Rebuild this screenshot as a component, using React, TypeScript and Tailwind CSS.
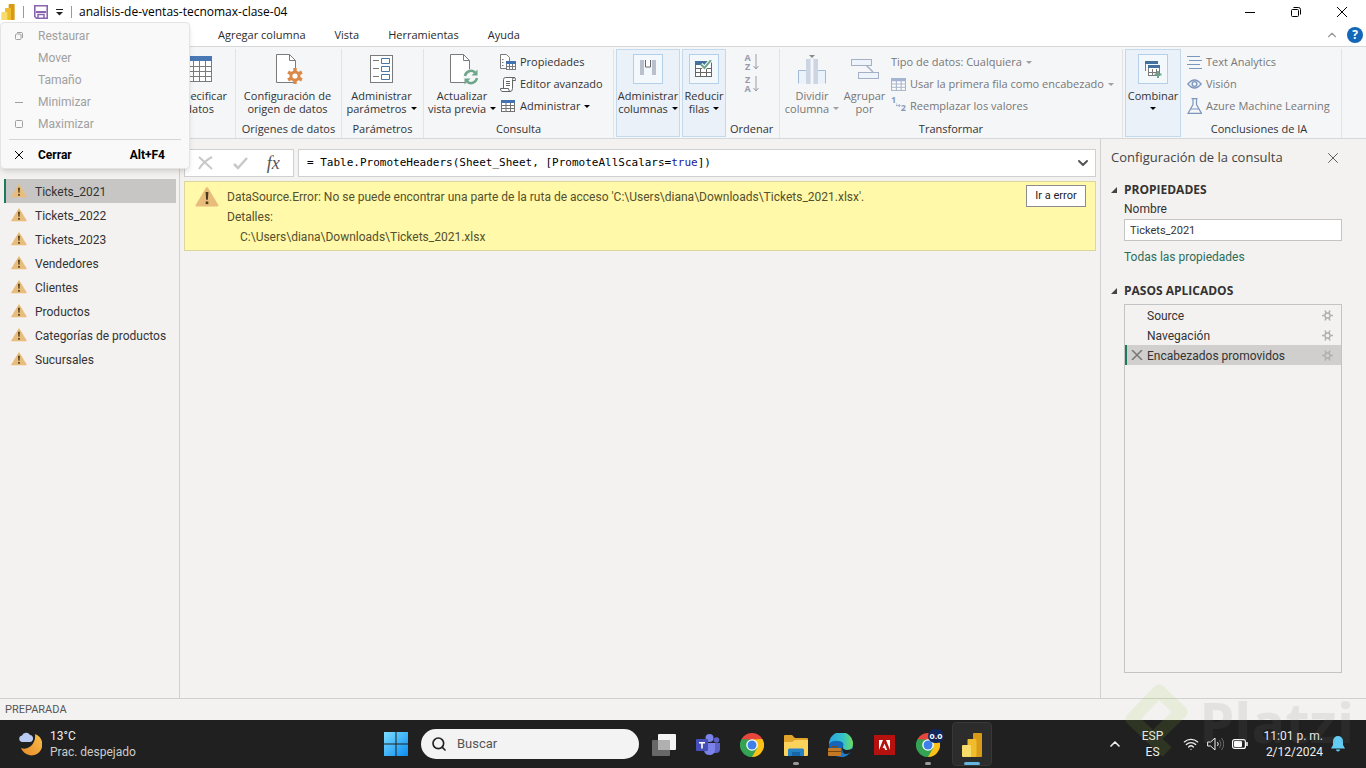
import React, { useState } from "react";
import { ChevronDown, ChevronUp, Search, Wifi, X } from "lucide-react";

const queries = [
  "Tickets_2021",
  "Tickets_2022",
  "Tickets_2023",
  "Vendedores",
  "Clientes",
  "Productos",
  "Categorías de productos",
  "Sucursales",
];

const steps = ["Source", "Navegación", "Encabezados promovidos"];

function Caret({ muted = false }: { muted?: boolean }) {
  return (
    <svg width="6" height="3" viewBox="0 0 6 3" className={`inline-block align-middle ${muted ? "text-[#a0a0a0]" : "text-black"}`}>
      <path d="M0 0h6L3 3z" fill="currentColor" />
    </svg>
  );
}

function Warning({ size }: { size: number }) {
  return (
    <svg width={size} height={size} viewBox="0 0 24 24" className="shrink-0">
      <path d="M12 3 22.500 20.500h-21z" fill="#e8bd7b" stroke="#e8bd7b" strokeWidth="2" strokeLinejoin="round" />
      <path d="M10.600 7h2.800l-.5 7.800h-1.800z" fill="#4a3a20" />
      <rect x="10.700" y="16.500" width="2.600" height="2.600" fill="#4a3a20" />
    </svg>
  );
}

function PowerBiLogo({ className }: { className: string }) {
  return (
    <svg viewBox="0 0 20 24" className={className}>
      <rect x="11" y="0" width="9" height="24" rx="1" fill="#d99b16" />
      <rect x="5.5" y="6" width="9" height="18" rx="1" fill="#eebc2d" />
      <rect x="0" y="12" width="9" height="12" rx="1" fill="#f8dc6a" />
    </svg>
  );
}

function TableIcon({ muted = false, size = 14 }: { muted?: boolean; size?: number }) {
  const line = muted ? "#a9b4c8" : "#737373";
  const head = muted ? "#a3b5d3" : "#4273b0";
  return (
    <svg width={size} height={size} viewBox="0 0 14 14" className="shrink-0">
      <rect x="0.5" y="1.5" width="13" height="11" fill="#fff" stroke={line} />
      <path d="M.5 6.5h13M.5 9.5h13M5 3v10M9.5 3v10" stroke={line} fill="none" />
      <rect x="0" y="1" width="14" height="3" fill={head} />
    </svg>
  );
}

function PageShape() {
  return (
    <>
      <path d="M4.5.5h13l6 6v22h-19z" fill="#fff" stroke="#7b7b7b" />
      <path d="M17.500.5v6h6" fill="none" stroke="#7b7b7b" />
    </>
  );
}

function StepGear() {
  return (
    <svg width="11" height="11" viewBox="0 0 11 11" fill="none" stroke="#b0b0b0">
      <circle cx="5.500" cy="5.500" r="2.600" strokeWidth="1.500" />
      <path d="M0 5.500h2.500M8.500 5.500H11M3 .5l1.200 2.500M8 .5 6.800 3M3 10.500 4.200 8M8 10.500 6.800 8" strokeWidth="1.600" />
    </svg>
  );
}

function Group({ caption, width, children }: { caption?: string; width: string; children: React.ReactNode }) {
  return (
    <div className={`flex shrink-0 flex-col border-r border-[#e1e3e6] ${width}`}>
      <div className="flex h-[72px]">{children}</div>
      {caption && <div className="text-center leading-4 whitespace-nowrap">{caption}</div>}
    </div>
  );
}

interface BigButtonProps {
  lines: [string, string?];
  caret?: boolean;
  muted?: boolean;
  boxed?: boolean;
  className?: string;
  children: React.ReactNode;
}

function BigButton({ lines, caret, muted, boxed, className = "", children }: BigButtonProps) {
  return (
    <button className={`flex shrink-0 flex-col items-center ${boxed ? "h-[88px] border border-[#c3d9ec] bg-[#eaf1f8]" : ""} pt-1 ${muted ? "text-[#777]" : ""} ${className}`}>
      <span className={`flex items-center justify-center ${boxed ? "mb-px h-[30px] w-[30px] border border-[#b5cfe8] bg-[#f3f8fd]" : "h-8 w-8"}`}>{children}</span>
      <span className="mt-1 flex flex-col items-center leading-[13px] whitespace-nowrap">
        <span>{lines[0]}</span>
        <span className="flex h-[13px] items-center gap-1">
          {lines[1]}
          {caret && <Caret muted={muted} />}
        </span>
      </span>
    </button>
  );
}

function SmallButton({ label, caret, muted, icon }: { label: string; caret?: boolean; muted?: boolean; icon?: React.ReactNode }) {
  return (
    <button className={`flex h-[22px] shrink-0 items-center gap-1 whitespace-nowrap ${muted ? "text-[#777]" : ""}`}>
      {icon}
      <span>{label}</span>
      {caret && <Caret muted={muted} />}
    </button>
  );
}

function SortIcon({ top, bottom }: { top: string; bottom: string }) {
  return (
    <span className="flex items-center gap-0.5 text-[#9a9aa8]">
      <span className="flex flex-col text-[9px] leading-[9px] font-bold">
        <span>{top}</span>
        <span>{bottom}</span>
      </span>
      <svg width="6" height="16" viewBox="0 0 6 16" fill="none" stroke="currentColor">
        <path d="M3 0v15M.5 12 3 15l2.500-3" />
      </svg>
    </span>
  );
}

function TitleBar() {
  return (
    <header className="flex h-6 shrink-0 items-center bg-white pr-px text-[12px] text-black">
      <PowerBiLogo className="ml-px h-4 w-[14px]" />
      <span className="ml-2 h-3 w-px bg-[#999]" />
      <button aria-label="Guardar" className="ml-2.5">
        <svg width="14" height="14" viewBox="0 0 14 14">
          <path d="M.8.8h12.400v12.400H2.500L.8 11.500z" fill="#fff" stroke="#8a63b0" strokeWidth="1.600" />
          <rect x="2" y="6" width="10" height="2" fill="#8a63b0" />
          <path d="M4 13V9.500h6V13" fill="none" stroke="#8a63b0" strokeWidth="1.500" />
        </svg>
      </button>
      <button aria-label="Personalizar barra" className="ml-2">
        <svg width="7" height="7" viewBox="0 0 7 7">
          <path d="M0 .5h7" stroke="#222" />
          <path d="M0 3h7L3.500 6.500z" fill="#222" />
        </svg>
      </button>
      <span className="ml-2 h-3 w-px bg-[#999]" />
      <h1 className="ml-[7px]">analisis-de-ventas-tecnomax-clase-04</h1>
      <div className="ml-auto flex h-full items-center">
        <button aria-label="Minimizar" className="flex w-[46px] justify-center">
          <svg width="10" height="10" viewBox="0 0 10 10"><path d="M0 5.500h10" stroke="#000" /></svg>
        </button>
        <button aria-label="Restaurar" className="flex w-[46px] justify-center">
          <svg width="10" height="10" viewBox="0 0 10 10" fill="none" stroke="#000">
            <rect x=".5" y="2.500" width="7" height="7" rx="1" />
            <path d="M2.500.5h5a2 2 0 0 1 2 2v5" />
          </svg>
        </button>
        <button aria-label="Cerrar" className="flex w-[46px] justify-center">
          <svg width="10" height="10" viewBox="0 0 10 10"><path d="M0 0l10 10M10 0 0 10" stroke="#000" /></svg>
        </button>
      </div>
    </header>
  );
}

function Tabs() {
  return (
    <nav className="flex h-[23px] shrink-0 items-center border-b border-[#d5d7d9] bg-white pr-[3px] pl-[218px] text-[11px] text-[#2b2b2b]">
      <button>Agregar columna</button>
      <button className="ml-[29px]">Vista</button>
      <button className="ml-[29px]">Herramientas</button>
      <button className="ml-[29px]">Ayuda</button>
      <button aria-label="Contraer la cinta" className="ml-auto text-[#999]">
        <ChevronUp size={14} strokeWidth={2} />
      </button>
      <button aria-label="Ayuda" className="ml-2 flex h-4 w-4 items-center justify-center rounded-full bg-[#1267b8] text-[12px] font-bold text-white">
        ?
      </button>
    </nav>
  );
}

function Ribbon() {
  return (
    <section className="flex h-[92px] shrink-0 overflow-hidden border-b border-[#d5d7d9] bg-[#f5f6f8] pt-0.5 text-[11px] text-[#333]">
      <Group width="w-[236px]">
        <BigButton lines={["Especificar", "datos"]} className="mr-2 ml-auto">
          <svg width="25" height="26" viewBox="0 0 25 26">
            <rect x=".5" y="1.500" width="24" height="24" fill="#fff" stroke="#7b7b7b" />
            <path d="M.5 10.500h24M.5 15.500h24M.5 20.500h24M6.500 5v20M12.500 5v20M18.500 5v20" stroke="#7b7b7b" />
            <rect width="25" height="5" fill="#4a78b5" />
          </svg>
        </BigButton>
      </Group>
      <Group caption="Orígenes de datos" width="w-[106px]">
        <BigButton lines={["Configuración de", "origen de datos"]} className="w-[103px]">
          <svg width="32" height="30" viewBox="0 0 32 30">
            <PageShape />
            <g transform="translate(15 14)">
              <path d="M8 0v16M1.100 4l13.800 8M1.100 12 14.900 4" stroke="#d98a4b" strokeWidth="3.400" />
              <circle cx="8" cy="8" r="5.500" fill="#d98a4b" />
              <circle cx="8" cy="8" r="2.600" fill="#fff" />
            </g>
          </svg>
        </BigButton>
      </Group>
      <Group caption="Parámetros" width="w-[82px]">
        <BigButton lines={["Administrar", "parámetros"]} caret className="w-[79px]">
          <svg width="23" height="28" viewBox="0 0 23 28" fill="none">
            <rect x=".5" y=".5" width="22" height="27" fill="#fff" stroke="#7b7b7b" />
            <path d="M3 5.500h6M3 13.500h6M3 21.500h6" stroke="#7b7b7b" />
            <path d="M11.500 3.500h8v5h-8zM11.500 11.500h8v5h-8zM11.500 19.500h8v5h-8z" stroke="#4779a8" />
          </svg>
        </BigButton>
      </Group>
      <Group caption="Consulta" width="w-[190px]">
        <BigButton lines={["Actualizar", "vista previa"]} caret className="w-[76px]">
          <svg width="32" height="31" viewBox="0 0 32 31">
            <PageShape />
            <circle cx="25" cy="23" r="8" fill="#f5f6f8" />
            <g fill="none" stroke="#6fa58b" strokeWidth="2.500">
              <path d="M19 22a6 6 0 0 1 10-3.500M31 24a6 6 0 0 1-10 3.500" />
            </g>
            <path d="M31.500 15.500v6h-6zM18.500 30.500v-6h6z" fill="#6fa58b" />
          </svg>
        </BigButton>
        <div className="flex flex-col pt-0.5">
          <SmallButton
            label="Propiedades"
            icon={
              <svg width="16" height="16" viewBox="0 0 16 16" fill="none">
                <path d="M.5.500h6l3 3v11h-9z" fill="#fff" stroke="#7b7b7b" />
                <path d="M2 5.500h1.500M2 8.500h1.500M2 11.500h1.500" stroke="#7b7b7b" />
                <rect x="6.500" y="7.500" width="9" height="8" fill="#fff" stroke="#7b7b7b" />
                <path d="M6.500 12.500h9M9.500 9v6M12.500 9v6" stroke="#7b7b7b" />
                <rect x="6" y="7" width="10" height="3" fill="#4273b0" />
              </svg>
            }
          />
          <SmallButton
            label="Editor avanzado"
            icon={
              <svg width="16" height="15" viewBox="0 0 16 15" fill="none" stroke="#666">
                <path d="M3.500 11V2.500q0-2 2-2h9q-2 0-2 2v9q0 3-2.500 3H2q-2-1-1.500-3h8q0 3 2 3" fill="#fff" />
                <path d="M12.500 3.500h3v-1q0-2-1.500-2M6 4.500h4M6 6.500h4M6 8.500h4" />
              </svg>
            }
          />
          <SmallButton label="Administrar" caret icon={<span className="flex w-4 justify-center"><TableIcon /></span>} />
        </div>
      </Group>
      <Group width="w-[166px]">
        <div className="flex gap-0.5 pl-0.5">
          <BigButton lines={["Administrar", "columnas"]} caret boxed className="w-16">
            <svg width="18" height="20" viewBox="0 0 18 20" fill="none">
              <rect x="1" y="1" width="4" height="15" fill="#b9c0cb" />
              <rect x="13" y="1" width="4" height="15" fill="#b9c0cb" />
              <path d="M6.500 1v7h5V1" fill="#fff" stroke="#666" />
            </svg>
          </BigButton>
          <BigButton lines={["Reducir", "filas"]} caret boxed className="w-11">
            <svg width="18" height="18" viewBox="0 0 18 18" fill="none">
              <rect x=".5" y="1.500" width="16" height="15" fill="#fff" stroke="#666" />
              <path d="M.5 8.500h16M.5 12.500h16M5.500 8v8M11.500 8v8" stroke="#666" />
              <rect x="0" y="1" width="12" height="4" fill="#41719c" />
              <path d="M6 4.500 9.500 8 16 0" stroke="#fff" strokeWidth="4" />
              <path d="M6 4.500 9.500 8 16 0" stroke="#6fa58b" strokeWidth="2" />
            </svg>
          </BigButton>
          <div className="flex flex-col items-center pt-0.5 pl-0.5">
            <button aria-label="Orden ascendente" className="flex h-[22px] shrink-0 items-center"><SortIcon top="A" bottom="Z" /></button>
            <button aria-label="Orden descendente" className="flex h-[22px] shrink-0 items-center"><SortIcon top="Z" bottom="A" /></button>
            <span className="mt-[26px] leading-4">Ordenar</span>
          </div>
        </div>
      </Group>
      <Group caption="Transformar" width="w-[343px]">
        <BigButton lines={["Dividir", "columna"]} caret muted className="w-16">
          <svg width="28" height="29" viewBox="0 0 28 29" fill="none">
            <path d="M.5 28.500v-13h8v13M19.500 28.500v-13h8v13" fill="#eaf2fb" stroke="#a5b9d6" />
            <path d="M8 4h4v25H8zM16 4h4v25h-4z" fill="#cdd5e3" />
            <path d="M12.500 3v26M15.500 3v26" stroke="#dce3ee" />
            <path d="M11 0h6l-3 3z" fill="#888" />
          </svg>
        </BigButton>
        <BigButton lines={["Agrupar", "por"]} muted className="w-[41px]">
          <svg width="28" height="24" viewBox="0 0 28 24" stroke="#a5b0c4" fill="#eef4fb">
            <path d="M14 7l8 8" strokeWidth="1.500" />
            <rect x=".5" y="2.500" width="20" height="6" />
            <rect x="7.500" y="15.500" width="20" height="6" />
          </svg>
        </BigButton>
        <div className="flex flex-col pt-0.5 pl-1.5">
          <SmallButton label="Tipo de datos: Cualquiera" caret muted />
          <SmallButton label="Usar la primera fila como encabezado" caret muted icon={<TableIcon muted size={15} />} />
          <SmallButton
            label="Reemplazar los valores"
            muted
            icon={
              <span className="flex w-[15px] items-start text-[9px] leading-[10px] font-bold text-[#8a9bb8]">
                <span className="-mt-1">1</span>
                <svg width="6" height="10" viewBox="0 0 6 10" fill="none" stroke="currentColor"><path d="M0 4v3h5M3.500 5l2 2-2 2" /></svg>
                <span className="mt-1">2</span>
              </span>
            }
          />
        </div>
      </Group>
      <Group width="w-[219px]">
        <div className="flex w-full">
          <BigButton lines={["Combinar"]} boxed caret className="ml-0.5 w-14">
            <svg width="18" height="18" viewBox="0 0 18 18" fill="none">
              <path d="M1.500 11V2.500h11" stroke="#7b7b7b" />
              <rect x="1" y="1" width="13" height="3" fill="#41719c" />
              <rect x="4.500" y="6.500" width="11" height="9" fill="#fff" stroke="#7b7b7b" />
              <path d="M4.500 12.500h11M8.500 9v7M12.500 9v7" stroke="#7b7b7b" />
              <rect x="4" y="5" width="12" height="3" fill="#41719c" />
              <path d="M14 11v7M10.500 14.500h7" stroke="#6fa58b" strokeWidth="2" />
            </svg>
          </BigButton>
          <div className="flex flex-1 flex-col pt-0.5 pl-1.5">
            <SmallButton label="Text Analytics" muted icon={<svg width="15" height="14" viewBox="0 0 15 14" stroke="#7d96bd"><path d="M0 1.500h13M2 5.500h13M0 9.500h13M2 13.500h13" /></svg>} />
            <SmallButton
              label="Visión"
              muted
              icon={
                <svg width="15" height="10" viewBox="0 0 16 10" fill="none" stroke="#7d96bd" strokeWidth="1.500">
                  <path d="M1 5q7-8.500 14 0-7 8.500-14 0z" />
                  <circle cx="8" cy="5" r="2.500" />
                </svg>
              }
            />
            <SmallButton
              label="Azure Machine Learning"
              muted
              icon={
                <svg width="15" height="16" viewBox="0 0 15 16" fill="none" stroke="#7d96bd" strokeWidth="1.200">
                  <path d="M4.500.6h6M6 .6v5.900L1 15.400h13.500L9.500 6.500V.6M3.500 11h8.500" />
                </svg>
              }
            />
            <span className="mt-1 shrink-0 pr-2.5 text-center leading-4">Conclusiones de IA</span>
          </div>
        </div>
      </Group>
    </section>
  );
}

function QueryList() {
  const [selected, setSelected] = useState(queries[0]);
  return (
    <aside className="w-[180px] shrink-0 border-r border-[#d0d0d0] pt-10 pr-[3px] pl-1">
      <ul>
        {queries.map((name) => (
          <li key={name}>
            <button
              onClick={() => setSelected(name)}
              className={`flex h-6 w-full items-center gap-2 border-l-2 pl-[5px] text-left whitespace-nowrap ${name === selected ? "border-[#1d7a5f] bg-[#c8c6c4]" : "border-transparent"}`}
            >
              <Warning size={16} />
              <span className="pt-px">{name}</span>
            </button>
          </li>
        ))}
      </ul>
    </aside>
  );
}

function FormulaBar() {
  return (
    <div className="flex h-7 gap-1">
      <div className="flex w-[110px] items-center justify-around border border-[#d0d0d0] bg-white px-1">
        <button aria-label="Cancelar">
          <svg width="16" height="14" viewBox="0 0 16 14" fill="none" stroke="#c8c8c8" strokeWidth="2"><path d="M1 1l13 12M14 1Q6 5 1 13" /></svg>
        </button>
        <button aria-label="Aceptar">
          <svg width="15" height="13" viewBox="0 0 15 13" fill="none" stroke="#c8c8c8" strokeWidth="2.500"><path d="M1 7l4 4 9-10" /></svg>
        </button>
        <button aria-label="Función" className="font-['Liberation_Serif',serif] text-[18px] leading-5 text-[#555] italic">fx</button>
      </div>
      <div className="flex flex-1 items-center border border-[#d0d0d0] bg-white pr-1 pl-2">
        <code className="flex-1 font-['DejaVu_Sans_Mono',monospace] text-[11px] text-black">
          = Table.PromoteHeaders(Sheet_Sheet, [PromoteAllScalars=<span className="text-[#1a1a9c]">true</span>])
        </code>
        <button aria-label="Expandir fórmula" className="text-[#555]">
          <ChevronDown size={16} strokeWidth={3} />
        </button>
      </div>
    </div>
  );
}

function ErrorPanel() {
  return (
    <div role="alert" className="mt-1 flex h-[70px] items-start border border-[#dcd69a] bg-[#fff9a9] pt-[3px] pr-[9px] pl-2.5 text-[#55502e]">
      <Warning size={24} />
      <div className="ml-2 flex-1 pt-0.5 leading-5">
        <p>DataSource.Error: No se puede encontrar una parte de la ruta de acceso 'C:\Users\diana\Downloads\Tickets_2021.xlsx'.</p>
        <p>Detalles:</p>
        <p className="pl-[13px]">C:\Users\diana\Downloads\Tickets_2021.xlsx</p>
      </div>
      <button className="h-[22px] w-[60px] border border-[#8c8c8c] bg-white text-[11px] text-[#222]">Ir a error</button>
    </div>
  );
}

function SectionTitle({ children }: { children: React.ReactNode }) {
  return (
    <h3 className="flex items-center gap-[7px] font-['Open_Sans',sans-serif] leading-5 font-bold text-[#333]">
      <svg width="6" height="6" viewBox="0 0 6 6"><path d="M6 0v6H0z" fill="#444" /></svg>
      {children}
    </h3>
  );
}

function Settings() {
  const [name, setName] = useState("Tickets_2021");
  return (
    <aside className="flex w-[266px] shrink-0 flex-col border-l border-[#d0d0d0] pt-[9px] pr-6 pb-[25px] pl-2.5">
      <div className="flex h-5 items-center justify-between">
        <h2 className="font-['Open_Sans',sans-serif] text-[13px] text-[#444]">Configuración de la consulta</h2>
        <button aria-label="Cerrar panel" className="text-[#555]">
          <X size={18} strokeWidth={1.25} />
        </button>
      </div>
      <div className="mt-3">
        <SectionTitle>PROPIEDADES</SectionTitle>
      </div>
      <div className="flex flex-col pl-[13px]">
        <label htmlFor="query-name" className="leading-[19px]">Nombre</label>
        <input
          id="query-name"
          value={name}
          onChange={(e) => setName(e.target.value)}
          className="h-[22px] w-full border border-[#c4c4c4] bg-white px-[5px] text-[11px] outline-none"
        />
        <a href="#propiedades" className="mt-1.5 leading-5 text-[#2c6e5b]">Todas las propiedades</a>
      </div>
      <div className="mt-3.5">
        <SectionTitle>PASOS APLICADOS</SectionTitle>
      </div>
      <ul className="mt-[3px] ml-[13px] flex-1 border border-[#c4c4c4]">
        {steps.map((step, i) => {
          const active = i === steps.length - 1;
          return (
            <li key={step} className={`flex h-5 items-center border-l-2 pr-2 ${active ? "border-[#1d7a5f] bg-[#d0cfcd]" : "border-transparent"}`}>
              <span className="flex w-5 justify-center text-[#777]">
                {active && (
                  <svg width="12" height="10" viewBox="0 0 12 10" fill="none" stroke="currentColor" strokeWidth="1.500"><path d="M1 0l10 10M11 0 1 10" /></svg>
                )}
              </span>
              <span className="flex-1 pt-px">{step}</span>
              <button aria-label={`Configurar ${step}`}>
                <StepGear />
              </button>
            </li>
          );
        })}
      </ul>
    </aside>
  );
}

function SystemMenu() {
  const row = "flex h-[22px] w-full items-center text-[#a0a0a0]";
  const glyph = "flex w-9 mr-px justify-center";
  return (
    <div role="menu" className="absolute top-[22px] left-0 w-[190px] rounded border border-[#e4e4e4] bg-[#f9f9f9] pt-0.5 pb-0.5 text-[12px] shadow-md">
      <button role="menuitem" disabled className={row}>
        <span className={glyph}>
          <svg width="8" height="8" viewBox="0 0 8 8" fill="none" stroke="currentColor"><rect x=".5" y="2" width="5.500" height="5.500" rx="1" /><path d="M2 .5h4.500a1 1 0 0 1 1 1V6" /></svg>
        </span>
        Restaurar
      </button>
      <button role="menuitem" disabled className={row}><span className={glyph} />Mover</button>
      <button role="menuitem" disabled className={row}><span className={glyph} />Tamaño</button>
      <button role="menuitem" disabled className={row}>
        <span className={glyph}><svg width="8" height="8" viewBox="0 0 8 8"><path d="M0 4.500h8" stroke="currentColor" /></svg></span>
        Minimizar
      </button>
      <button role="menuitem" disabled className={row}>
        <span className={glyph}><svg width="8" height="8" viewBox="0 0 8 8" fill="none"><rect x=".5" y=".5" width="7" height="7" rx="1" stroke="currentColor" /></svg></span>
        Maximizar
      </button>
      <div className="mx-2 my-1 h-px bg-[#d5d5d5]" />
      <button role="menuitem" className="flex h-[22px] w-full items-center pr-6 font-bold text-black">
        <span className={glyph}>
          <svg width="8" height="8" viewBox="0 0 8 8"><path d="M0 0l8 8M8 0 0 8" stroke="currentColor" /></svg>
        </span>
        Cerrar
        <span className="ml-auto">Alt+F4</span>
      </button>
    </div>
  );
}

function ChromeLogo() {
  return (
    <svg width="24" height="24" viewBox="0 0 24 24">
      <path d="M12 12 1.600 6A12 12 0 0 1 22.400 6z" fill="#e8453c" />
      <path d="M12 12 22.400 6A12 12 0 0 1 12 24z" fill="#fbc116" />
      <path d="M12 12v12A12 12 0 0 1 1.600 6z" fill="#34a353" />
      <path d="M12 6h10.400l-5 9z" fill="#fbc116" />
      <path d="M17.200 15 12 24l-5-9z" fill="#34a353" />
      <path d="M6.800 15 1.600 6 12 6.500z" fill="#34a353" />
      <path d="M1.600 6h20.800L12 6.600z" fill="#e8453c" />
      <circle cx="12" cy="12" r="5.800" fill="#fff" />
      <circle cx="12" cy="12" r="4.500" fill="#3f7fe8" />
    </svg>
  );
}

function TaskItem({ label, running, active, children }: { label: string; running?: boolean; active?: boolean; children: React.ReactNode }) {
  return (
    <button aria-label={label} className={`flex h-11 w-10 flex-col items-center justify-end rounded ${active ? "border border-[#383838] bg-[#2c2c2c]" : ""}`}>
      <span className="flex h-[26px] items-center">{children}</span>
      <span className={`mt-1 h-[3px] rounded-full ${active ? "w-4 bg-[#64b5e2]" : running ? "mb-px w-1.5 bg-[#9a9a9a]" : "mb-px w-1.5"}`} />
    </button>
  );
}

function Taskbar() {
  return (
    <footer className="flex h-12 shrink-0 items-center bg-[#202020] pr-[21px] pl-[18px] text-[12px] text-[#eee]">
      <button className="flex w-[366px] shrink-0 items-center gap-2 text-left">
        <svg width="24" height="24" viewBox="0 0 24 24">
          <defs>
            <linearGradient id="moon" x1="1" y1="0" x2="0" y2="1">
              <stop offset="0" stopColor="#f8c04a" />
              <stop offset="1" stopColor="#e88a2a" />
            </linearGradient>
          </defs>
          <path d="M17 2a11 11 0 1 1-14 14q5 2 10-2 5-5 4-12z" fill="url(#moon)" />
          <path d="M4 10a3.300 3.300 0 0 1 0-6.500 4.500 4.500 0 0 1 8-.5 3.600 3.600 0 0 1 .5 7z" fill="#b9cbf3" />
        </svg>
        <span className="leading-4">
          <span className="block">13°C</span>
          <span className="block text-[#ccc]">Prac. despejado</span>
        </span>
      </button>
      <div className="flex items-center">
        <button aria-label="Inicio" className="mr-[13px]">
          <svg width="24" height="24" viewBox="0 0 24 24">
            <defs>
              <linearGradient id="win" x1="0" y1="0" x2="1" y2="1">
                <stop offset="0" stopColor="#7bdcff" />
                <stop offset="1" stopColor="#0a8cf0" />
              </linearGradient>
            </defs>
            <path d="M0 0h11.500v11.500H0zM12.500 0H24v11.500H12.500zM0 12.500h11.500V24H0zM12.500 12.500H24V24H12.500z" fill="url(#win)" />
          </svg>
        </button>
        <label className="mr-[5px] flex h-[30px] w-[218px] items-center gap-2.5 rounded-full bg-[#f3f3f3] pl-[10px] text-[#222]">
          <Search size={16} strokeWidth={2.5} />
          <input aria-label="Buscar" placeholder="Buscar" className="w-32 bg-transparent text-[13px] outline-none placeholder:text-[#555]" />
        </label>
        <div className="flex items-center gap-1">
          <TaskItem label="Vista de tareas">
            <svg width="24" height="22" viewBox="0 0 24 22">
              <rect x="6" y="0" width="18" height="16" rx="1" fill="#f4f4f4" />
              <rect x="0" y="6" width="18" height="16" rx="1" fill="#707070" opacity=".9" />
              <path d="M6 6h12v10H6z" fill="#b0b0b0" />
            </svg>
          </TaskItem>
          <TaskItem label="Teams">
            <svg width="24" height="22" viewBox="0 0 24 22">
              <circle cx="20.500" cy="6" r="2.800" fill="#5b62c4" />
              <circle cx="13.500" cy="4" r="4" fill="#7b83eb" />
              <path d="M17 9h7v6q0 4-4 4h-3z" fill="#5b62c4" />
              <path d="M8 9h11v6q0 6-5.500 6T8 15z" fill="#7b83eb" />
              <rect y="5" width="12" height="12" rx="1" fill="#464eb8" />
              <path d="M3 8h6v1.600H6.800V14.500H5.200V9.600H3z" fill="#fff" />
            </svg>
          </TaskItem>
          <TaskItem label="Chrome"><ChromeLogo /></TaskItem>
          <TaskItem label="Explorador de archivos" running>
            <svg width="24" height="22" viewBox="0 0 24 22">
              <path d="M0 2q0-1 1-1h7l3 3h12q1 0 1 1v5H0z" fill="#e2a52c" />
              <path d="M0 8h8l3-2h13v15q0 1-1 1H1q-1 0-1-1z" fill="#fbd35c" />
              <path d="M4 22v-6q0-1.500 1.500-1.500h13Q20 14.500 20 16v6z" fill="#2583c5" />
              <path d="M8 18h8v4H8z" fill="#1668a4" />
            </svg>
          </TaskItem>
          <TaskItem label="Edge">
            <svg width="25" height="24" viewBox="0 0 25 24">
              <defs>
                <linearGradient id="edge" x1="0" y1="0" x2="1" y2="0">
                  <stop offset="0" stopColor="#2ba5e0" />
                  <stop offset=".6" stopColor="#35c4c8" />
                  <stop offset="1" stopColor="#6fdc5c" />
                </linearGradient>
              </defs>
              <circle cx="13" cy="12" r="12" fill="#1565b8" />
              <path d="M1 11A12 12 0 0 1 25 11q0 6-6 6-5 0-4-3 2-5-4-6Q4 7 1 11z" fill="url(#edge)" />
              <path d="M14 13q1 4 5 4 3 0 5-1l1 8h-7q-4-5-4-11z" fill="#202020" />
              <path d="M11 14q1 7 7 7 3 0 5-2-4 5-10 5-4-3-2-10z" fill="#1d7fd0" />
              <rect y="15" width="13" height="8" rx="1" fill="#c47a25" />
              <path d="M4 15v-1.500h5V15M0 18.500h13" fill="none" stroke="#7c4510" />
            </svg>
          </TaskItem>
          <TaskItem label="Adobe Acrobat">
            <svg width="21" height="20" viewBox="0 0 21 20">
              <rect width="21" height="20" fill="#b5120f" />
              <path d="M5 5h4L5 15zM12 5h4v10zM10.500 8.500l2.700 6.500h-2l-.8-2H8.600z" fill="#fff" />
            </svg>
          </TaskItem>
          <TaskItem label="Chrome, perfil" running>
            <span className="relative block">
              <ChromeLogo />
              <span className="absolute -top-1 left-3 h-3.5 w-4 rounded-full bg-[#10265c] text-center text-[9px] leading-3.5 font-bold text-white">o.o</span>
            </span>
          </TaskItem>
          <TaskItem label="Power BI" active><PowerBiLogo className="h-6 w-5" /></TaskItem>
        </div>
      </div>
      <div className="ml-auto flex items-center text-center leading-4">
        <button aria-label="Mostrar iconos ocultos"><ChevronUp size={16} strokeWidth={2.5} /></button>
        <button className="ml-[18px] w-6"><span className="block">ESP</span><span className="block">ES</span></button>
        <Wifi size={16} className="ml-[18px]" />
        <svg width="17" height="14" viewBox="0 0 17 14" fill="none" stroke="currentColor" className="ml-2">
          <path d="M.6 5h3L8 1v12L3.600 9h-3z" />
          <path d="M10.500 5q1.500 2 0 4" />
          <path d="M12.500 3q3 4 0 8M14.500 1q4.500 6 0 12" stroke="#666" />
        </svg>
        <svg width="16" height="10" viewBox="0 0 16 10" className="ml-2">
          <rect x=".6" y=".6" width="12.800" height="8.800" rx="2" fill="none" stroke="#fff" strokeWidth="1.200" />
          <rect x="2" y="2" width="8" height="6" rx="1" fill="#fff" />
          <path d="M15 3v4" stroke="#fff" strokeWidth="1.500" />
        </svg>
        <button className="ml-4 text-right"><span className="block">11:01 p. m.</span><span className="block">2/12/2024</span></button>
        <svg width="14" height="16" viewBox="0 0 14 16" className="ml-2">
          <path d="M7 0a5 5 0 0 1 5 5v4l2 3.500H0L2 9V5a5 5 0 0 1 5-5zM5 13.500h4a2 2 0 0 1-4 0z" fill="#62cdf2" />
        </svg>
      </div>
    </footer>
  );
}

function Watermark() {
  return (
    <div aria-hidden="true" className="pointer-events-none absolute right-3 bottom-2 flex items-center gap-2.5 font-['Open_Sans',sans-serif] opacity-12">
      <svg width="66" height="78" viewBox="0 0 66 78">
        <path d="M44 70 9 37 36 9l22 21-25 24" fill="none" stroke="#98ca3f" strokeWidth="13" strokeLinejoin="round" />
      </svg>
      <span className="text-[56px] leading-[60px] font-bold text-[#777]">Platzi</span>
    </div>
  );
}

export default function App() {
  return (
    <div className="relative flex h-screen flex-col overflow-hidden bg-[#f3f2f1] font-['Open_Sans',sans-serif] text-[12px] text-[#333]">
      <TitleBar />
      <Tabs />
      <Ribbon />
      <div className="flex min-h-0 flex-1 flex-col font-['Roboto',sans-serif]">
        <main className="flex min-h-0 flex-1">
          <QueryList />
          <section className="min-w-0 flex-1 px-1 pt-2.5">
            <FormulaBar />
            <ErrorPanel />
          </section>
          <Settings />
        </main>
        <div className="flex h-[22px] shrink-0 items-center border-t border-[#d0d0d0] px-[5px] pt-0.5 text-[11px] text-[#555]">PREPARADA</div>
        <Taskbar />
        <SystemMenu />
      </div>
      <Watermark />
    </div>
  );
}
